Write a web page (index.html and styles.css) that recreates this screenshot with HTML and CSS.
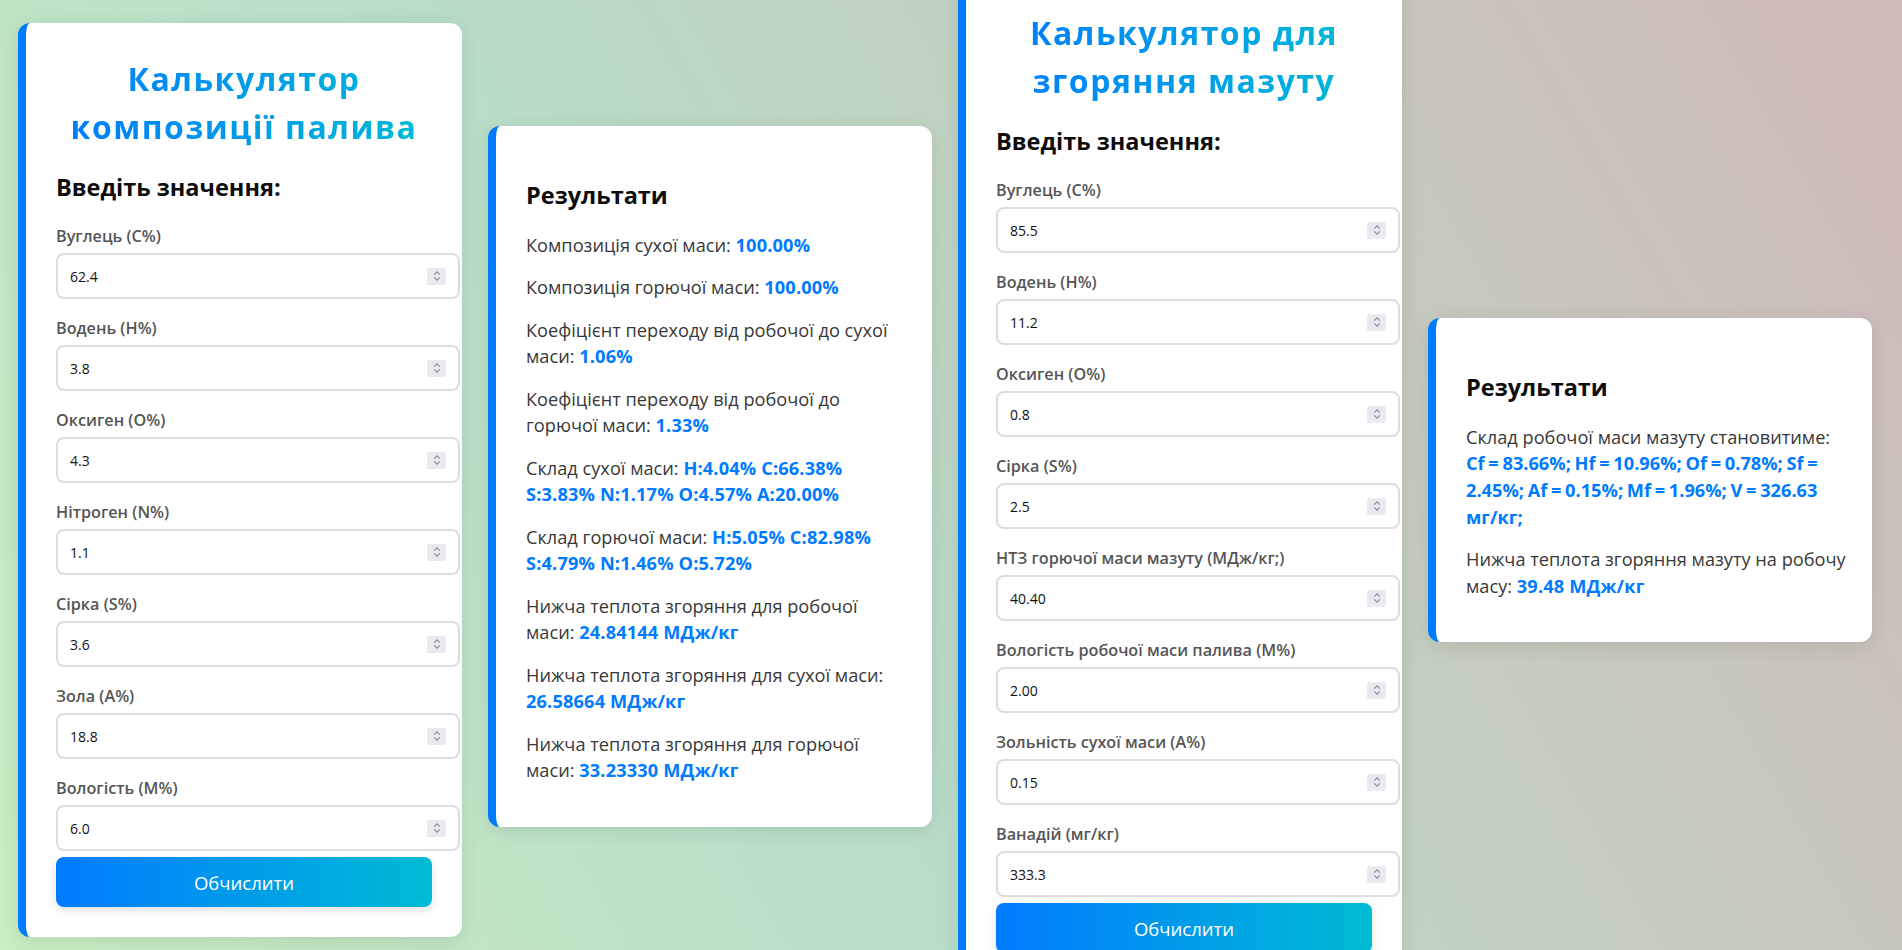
FILE: index.html
```html
<!DOCTYPE html>
<html lang="uk">
<head>
<meta charset="utf-8">
<title>Калькулятори палива</title>
<link rel="stylesheet" href="styles.css">
</head>
<body>
<main class="page">

  <section class="card form-card">
    <h1 class="title">Калькулятор композиції палива</h1>
    <h2 class="subtitle">Введіть значення:</h2>
    <div class="field">
      <label for="c1">Вуглець (C%)</label>
      <div class="input-wrap"><input id="c1" type="number" value="62.4"><span class="spin"><svg width="8" height="12" viewBox="0 0 8 12"><path d="M1.2 4.6 4 1.8 6.8 4.6M1.2 7.4 4 10.2 6.8 7.4"/></svg></span></div>
    </div>
    <div class="field">
      <label for="h1">Водень (H%)</label>
      <div class="input-wrap"><input id="h1" type="number" value="3.8"><span class="spin"><svg width="8" height="12" viewBox="0 0 8 12"><path d="M1.2 4.6 4 1.8 6.8 4.6M1.2 7.4 4 10.2 6.8 7.4"/></svg></span></div>
    </div>
    <div class="field">
      <label for="o1">Оксиген (O%)</label>
      <div class="input-wrap"><input id="o1" type="number" value="4.3"><span class="spin"><svg width="8" height="12" viewBox="0 0 8 12"><path d="M1.2 4.6 4 1.8 6.8 4.6M1.2 7.4 4 10.2 6.8 7.4"/></svg></span></div>
    </div>
    <div class="field">
      <label for="n1">Нітроген (N%)</label>
      <div class="input-wrap"><input id="n1" type="number" value="1.1"><span class="spin"><svg width="8" height="12" viewBox="0 0 8 12"><path d="M1.2 4.6 4 1.8 6.8 4.6M1.2 7.4 4 10.2 6.8 7.4"/></svg></span></div>
    </div>
    <div class="field">
      <label for="s1">Сірка (S%)</label>
      <div class="input-wrap"><input id="s1" type="number" value="3.6"><span class="spin"><svg width="8" height="12" viewBox="0 0 8 12"><path d="M1.2 4.6 4 1.8 6.8 4.6M1.2 7.4 4 10.2 6.8 7.4"/></svg></span></div>
    </div>
    <div class="field">
      <label for="a1">Зола (A%)</label>
      <div class="input-wrap"><input id="a1" type="number" value="18.8"><span class="spin"><svg width="8" height="12" viewBox="0 0 8 12"><path d="M1.2 4.6 4 1.8 6.8 4.6M1.2 7.4 4 10.2 6.8 7.4"/></svg></span></div>
    </div>
    <div class="field">
      <label for="m1">Вологість (M%)</label>
      <div class="input-wrap"><input id="m1" type="number" value="6.0"><span class="spin"><svg width="8" height="12" viewBox="0 0 8 12"><path d="M1.2 4.6 4 1.8 6.8 4.6M1.2 7.4 4 10.2 6.8 7.4"/></svg></span></div>
    </div>
    <button class="btn" type="button">Обчислити</button>
  </section>

  <section class="card results results-fuel">
    <h2 class="subtitle">Результати</h2>
    <p>Композиція сухої маси: <strong>100.00%</strong></p>
    <p>Композиція горючої маси: <strong>100.00%</strong></p>
    <p>Коефіцієнт переходу від робочої до сухої<br>маси: <strong>1.06%</strong></p>
    <p>Коефіцієнт переходу від робочої до<br>горючої маси: <strong>1.33%</strong></p>
    <p>Склад сухої маси: <strong>H:4.04% C:66.38%<br>S:3.83% N:1.17% O:4.57% A:20.00%</strong></p>
    <p>Склад горючої маси: <strong>H:5.05% C:82.98%<br>S:4.79% N:1.46% O:5.72%</strong></p>
    <p>Нижча теплота згоряння для робочої<br>маси: <strong>24.84144 МДж/кг</strong></p>
    <p>Нижча теплота згоряння для сухої маси:<br><strong>26.58664 МДж/кг</strong></p>
    <p>Нижча теплота згоряння для горючої<br>маси: <strong>33.23330 МДж/кг</strong></p>
  </section>

  <section class="card form-card">
    <h1 class="title">Калькулятор для згоряння мазуту</h1>
    <h2 class="subtitle">Введіть значення:</h2>
    <div class="field">
      <label for="c2">Вуглець (C%)</label>
      <div class="input-wrap"><input id="c2" type="number" value="85.5"><span class="spin"><svg width="8" height="12" viewBox="0 0 8 12"><path d="M1.2 4.6 4 1.8 6.8 4.6M1.2 7.4 4 10.2 6.8 7.4"/></svg></span></div>
    </div>
    <div class="field">
      <label for="h2">Водень (H%)</label>
      <div class="input-wrap"><input id="h2" type="number" value="11.2"><span class="spin"><svg width="8" height="12" viewBox="0 0 8 12"><path d="M1.2 4.6 4 1.8 6.8 4.6M1.2 7.4 4 10.2 6.8 7.4"/></svg></span></div>
    </div>
    <div class="field">
      <label for="o2">Оксиген (O%)</label>
      <div class="input-wrap"><input id="o2" type="number" value="0.8"><span class="spin"><svg width="8" height="12" viewBox="0 0 8 12"><path d="M1.2 4.6 4 1.8 6.8 4.6M1.2 7.4 4 10.2 6.8 7.4"/></svg></span></div>
    </div>
    <div class="field">
      <label for="s2">Сірка (S%)</label>
      <div class="input-wrap"><input id="s2" type="number" value="2.5"><span class="spin"><svg width="8" height="12" viewBox="0 0 8 12"><path d="M1.2 4.6 4 1.8 6.8 4.6M1.2 7.4 4 10.2 6.8 7.4"/></svg></span></div>
    </div>
    <div class="field">
      <label for="q2">НТЗ горючої маси мазуту (МДж/кг;)</label>
      <div class="input-wrap"><input id="q2" type="number" value="40.40"><span class="spin"><svg width="8" height="12" viewBox="0 0 8 12"><path d="M1.2 4.6 4 1.8 6.8 4.6M1.2 7.4 4 10.2 6.8 7.4"/></svg></span></div>
    </div>
    <div class="field">
      <label for="m2">Вологість робочої маси палива (M%)</label>
      <div class="input-wrap"><input id="m2" type="number" value="2.00"><span class="spin"><svg width="8" height="12" viewBox="0 0 8 12"><path d="M1.2 4.6 4 1.8 6.8 4.6M1.2 7.4 4 10.2 6.8 7.4"/></svg></span></div>
    </div>
    <div class="field">
      <label for="a2">Зольність сухої маси (A%)</label>
      <div class="input-wrap"><input id="a2" type="number" value="0.15"><span class="spin"><svg width="8" height="12" viewBox="0 0 8 12"><path d="M1.2 4.6 4 1.8 6.8 4.6M1.2 7.4 4 10.2 6.8 7.4"/></svg></span></div>
    </div>
    <div class="field">
      <label for="v2">Ванадій (мг/кг)</label>
      <div class="input-wrap"><input id="v2" type="number" value="333.3"><span class="spin"><svg width="8" height="12" viewBox="0 0 8 12"><path d="M1.2 4.6 4 1.8 6.8 4.6M1.2 7.4 4 10.2 6.8 7.4"/></svg></span></div>
    </div>
    <button class="btn" type="button">Обчислити</button>
  </section>

  <section class="card results">
    <h2 class="subtitle">Результати</h2>
    <p>Склад робочої маси мазуту становитиме:<br><strong class="tight">Cf = 83.66%; Hf = 10.96%; Of = 0.78%; Sf =<br>2.45%; Af = 0.15%; Mf = 1.96%; V = 326.63<br>мг/кг;</strong></p>
    <p>Нижча теплота згоряння мазуту на робочу<br>масу: <strong>39.48 МДж/кг</strong></p>
  </section>

</main>
</body>
</html>
```

FILE: styles.css
```css
html, body {
  margin: 0;
  height: 100%;
}

body {
  font-family: "Open Sans", "Noto Sans", sans-serif;
  background: linear-gradient(60deg, #c9eec3 0%, #b7dec8 38%, #c2d0c0 62%, #cfb8b8 100%);
  overflow: hidden;
  color: #333;
}

.page {
  display: flex;
  align-items: center;
  gap: 26px;
  height: 950px;
  box-sizing: border-box;
  padding: 10px 0 0 18px;
}

.card {
  flex: none;
  width: 444px;
  box-sizing: border-box;
  background: #fff;
  border-left: 8px solid #007bff;
  border-radius: 12px;
  padding: 30px;
  box-shadow: 0 4px 20px rgba(0, 0, 0, 0.1);
}

.title {
  margin: 2px 0 0;
  font-size: 32px;
  line-height: 48px;
  font-weight: 700;
  letter-spacing: 1.5px;
  text-align: center;
  background: linear-gradient(90deg, #007bff, #00bcd4);
  -webkit-background-clip: text;
  background-clip: text;
  color: transparent;
}

.subtitle {
  font-size: 23.5px;
  line-height: 27px;
  font-weight: 700;
  color: #0d0d0d;
}

.form-card .subtitle {
  margin: 23px 0 25px;
}

.results .subtitle {
  margin: 26px 0 23px;
}

.results-fuel {
  margin-bottom: 7px;
}

.field label {
  display: block;
  margin: 19px 0 7px;
  font-size: 16.2px;
  line-height: 20px;
  font-weight: 600;
  color: #555;
}

.input-wrap {
  position: relative;
  width: calc(100% + 28px);
}

.input-wrap input {
  display: block;
  width: 100%;
  height: 46px;
  box-sizing: border-box;
  margin: 0;
  padding: 0 12px;
  border: 2px solid #ddd;
  border-radius: 8px;
  background: #fff;
  font-family: inherit;
  font-size: 14px;
  color: #111;
  outline: none;
  -moz-appearance: textfield;
}

.input-wrap input::-webkit-inner-spin-button,
.input-wrap input::-webkit-outer-spin-button {
  -webkit-appearance: none;
  margin: 0;
}

.spin {
  position: absolute;
  right: 14px;
  top: 50%;
  width: 19px;
  height: 17px;
  margin-top: -8.5px;
  background: #e9e9ef;
  border-radius: 2px;
  display: flex;
  align-items: center;
  justify-content: center;
}

.spin path {
  fill: none;
  stroke: #8a8a96;
  stroke-width: 1.1;
}

.btn {
  display: block;
  width: 100%;
  height: 50px;
  margin-top: 6px;
  border: none;
  border-radius: 8px;
  background: linear-gradient(90deg, #007bff, #00bcd4);
  color: #fff;
  font-family: inherit;
  font-size: 18.5px;
  font-weight: 500;
  box-shadow: 0 4px 10px rgba(0, 0, 0, 0.12);
  cursor: pointer;
}

.results p {
  margin: 0 0 15.6px;
  font-size: 18.2px;
  line-height: 26.7px;
  color: #383838;
  white-space: nowrap;
}

.results p:last-child {
  margin-bottom: 13px;
}

.results strong {
  color: #007bff;
  font-weight: 700;
  letter-spacing: 0.15px;
}

.results strong.tight {
  letter-spacing: 0;
  word-spacing: -1px;
}
```
